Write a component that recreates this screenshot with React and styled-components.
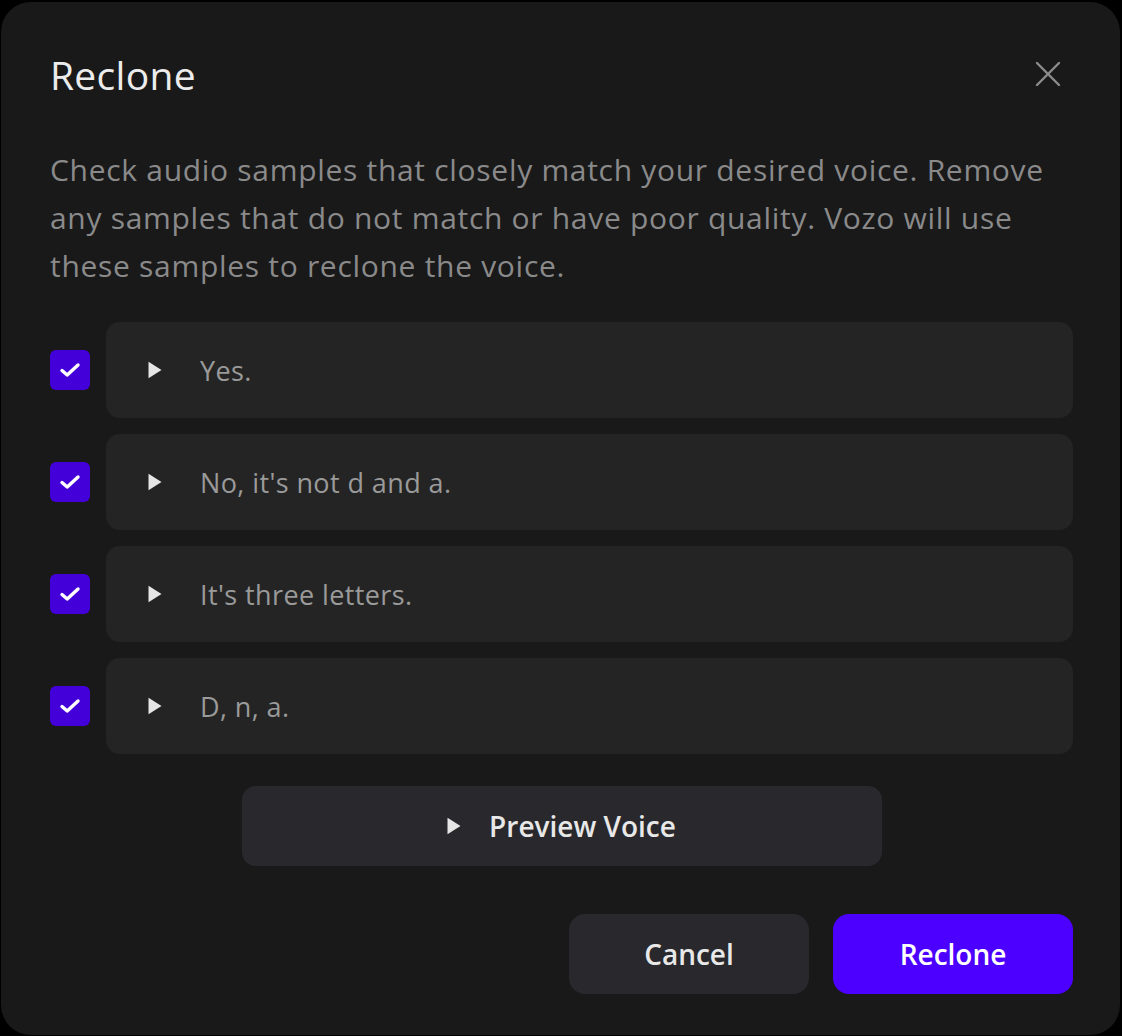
import React, { useState } from "react";
import styled, { createGlobalStyle } from "styled-components";

const GlobalStyle = createGlobalStyle`
  html, body {
    margin: 0;
    padding: 0;
    background: #000;
  }
  body {
    font-family: "Open Sans", Lato, "Liberation Sans", sans-serif;
  }
  #root {
    padding: 2px 2px 1px 1px;
  }
`;

const samples = [
  "Yes.",
  "No, it's not d and a.",
  "It's three letters.",
  "D, n, a.",
];

function PlayIcon() {
  return (
    <svg width="14" height="18" viewBox="0 0 14 18" aria-hidden="true">
      <path d="M0.5 0.8 L13.5 9 L0.5 17.2 Z" fill="currentColor" />
    </svg>
  );
}

function CheckIcon() {
  return (
    <svg width="24" height="24" viewBox="0 0 24 24" aria-hidden="true">
      <path
        d="M4 12.5 L9.2 17 L20 7"
        fill="none"
        stroke="#fff"
        strokeWidth="3.4"
        strokeLinecap="round"
        strokeLinejoin="round"
      />
    </svg>
  );
}

function CloseIcon() {
  return (
    <svg width="26" height="26" viewBox="0 0 26 26" aria-hidden="true">
      <path
        d="M2 2 L24 24 M24 2 L2 24"
        stroke="#8c8c8c"
        strokeWidth="2.4"
        strokeLinecap="round"
      />
    </svg>
  );
}

export default function App() {
  const [checked, setChecked] = useState(samples.map(() => true));

  const toggle = (i) =>
    setChecked((prev) => prev.map((v, j) => (j === i ? !v : v)));

  return (
    <>
      <GlobalStyle />
      <Modal>
        <Header>
          <Title>Reclone</Title>
          <CloseButton aria-label="Close">
            <CloseIcon />
          </CloseButton>
        </Header>
        <Description>
          Check audio samples that closely match your desired voice. Remove
          any samples that do not match or have poor quality. Vozo will use
          these samples to reclone the voice.
        </Description>
        <List>
          {samples.map((text, i) => (
            <Row key={i}>
              <Checkbox $on={checked[i]} onClick={() => toggle(i)}>
                {checked[i] && <CheckIcon />}
              </Checkbox>
              <Sample>
                <PlayButton>
                  <PlayIcon />
                </PlayButton>
                <SampleText>{text}</SampleText>
              </Sample>
            </Row>
          ))}
        </List>
        <PreviewRow>
          <PreviewButton>
            <PlayButton>
              <PlayIcon />
            </PlayButton>
            Preview Voice
          </PreviewButton>
        </PreviewRow>
        <Footer>
          <ActionButton>Cancel</ActionButton>
          <ActionButton $primary>Reclone</ActionButton>
        </Footer>
      </Modal>
    </>
  );
}

const Modal = styled.div`
  box-sizing: border-box;
  width: 1119px;
  height: 1033px;
  background: #19191a;
  border-radius: 30px;
  padding: 48px 47px 40px 49px;
  display: flex;
  flex-direction: column;
`;

const Header = styled.div`
  display: flex;
  align-items: center;
  justify-content: space-between;
  height: 48px;
`;

const Title = styled.h2`
  margin: 0;
  font-size: 39px;
  font-weight: 500;
  color: #ececec;
  letter-spacing: 0.3px;
`;

const CloseButton = styled.button`
  background: none;
  border: none;
  padding: 0;
  margin-right: 12px;
  display: flex;
  cursor: pointer;
`;

const Description = styled.p`
  margin: 48px 0 0;
  font-size: 30px;
  line-height: 48px;
  letter-spacing: 0.7px;
  color: #8a8a8a;
`;

const List = styled.div`
  margin-top: 32px;
  display: flex;
  flex-direction: column;
  gap: 16px;
`;

const Row = styled.div`
  display: flex;
  align-items: center;
  gap: 16px;
`;

const Checkbox = styled.button`
  flex: none;
  width: 40px;
  height: 40px;
  border: none;
  border-radius: 6px;
  padding: 0;
  background: ${(p) => (p.$on ? "#4400d8" : "transparent")};
  box-shadow: ${(p) => (p.$on ? "none" : "inset 0 0 0 2px #555")};
  display: flex;
  align-items: center;
  justify-content: center;
  cursor: pointer;
`;

const Sample = styled.div`
  flex: 1;
  height: 96px;
  background: #242424;
  border-radius: 14px;
  display: flex;
  align-items: center;
  padding-left: 42px;
  gap: 38px;
`;

const PlayButton = styled.span`
  display: flex;
  color: #e6e6e6;
`;

const SampleText = styled.span`
  font-size: 27px;
  letter-spacing: 0.4px;
  color: #9a9a9a;
`;

const PreviewRow = styled.div`
  display: flex;
  justify-content: center;
  margin-top: 32px;
`;

const PreviewButton = styled.button`
  width: 640px;
  height: 80px;
  border: none;
  border-radius: 14px;
  background: #28282d;
  color: #e8e8e8;
  font-family: inherit;
  font-size: 28px;
  font-weight: 600;
  display: flex;
  align-items: center;
  justify-content: center;
  gap: 28px;
  cursor: pointer;
`;

const Footer = styled.div`
  margin-top: 48px;
  display: flex;
  justify-content: flex-end;
  gap: 24px;
`;

const ActionButton = styled.button`
  width: 240px;
  height: 80px;
  border: none;
  border-radius: 16px;
  background: ${(p) => (p.$primary ? "#4c00ff" : "#28282d")};
  color: ${(p) => (p.$primary ? "#ffffff" : "#e8e8e8")};
  font-family: inherit;
  font-size: 28px;
  font-weight: 600;
  cursor: pointer;
`;
